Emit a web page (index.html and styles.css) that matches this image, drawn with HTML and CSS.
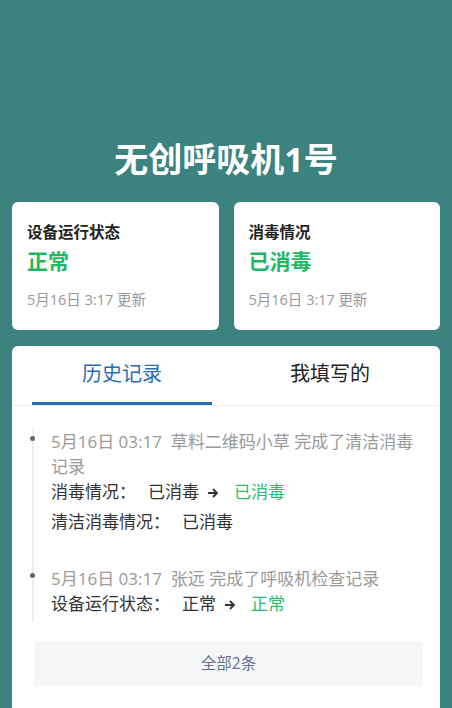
FILE: index.html
```html
<!DOCTYPE html>
<html lang="zh">
<head>
<meta charset="utf-8">
<link rel="stylesheet" href="styles.css">
</head>
<body>
<div class="page">
  <h1 class="title">无创呼吸机1号</h1>
  <div class="cards">
    <div class="card">
      <div class="card-label">设备运行状态</div>
      <div class="card-value">正常</div>
      <div class="card-time">5月16日 3:17 更新</div>
    </div>
    <div class="card">
      <div class="card-label">消毒情况</div>
      <div class="card-value">已消毒</div>
      <div class="card-time">5月16日 3:17 更新</div>
    </div>
  </div>
  <div class="panel">
    <div class="tabs">
      <div class="tab active">历史记录</div>
      <div class="tab second">我填写的</div>
    </div>
    <div class="timeline">
      <div class="entry">
        <div class="meta">5月16日 03:17&nbsp; 草料二维码小草 完成了清洁消毒记录</div>
        <div class="row">消毒情况：<span class="val">已消毒</span><svg class="arrow" viewBox="0 0 12 12" width="12" height="12"><path d="M1 6H10M6 2L10 6L6 10" fill="none" stroke="#333" stroke-width="1.8"/></svg><span class="new">已消毒</span></div>
        <div class="row">清洁消毒情况：<span class="val">已消毒</span></div>
      </div>
      <div class="entry">
        <div class="meta">5月16日 03:17&nbsp; 张远 完成了呼吸机检查记录</div>
        <div class="row">设备运行状态：<span class="val">正常</span><svg class="arrow" viewBox="0 0 12 12" width="12" height="12"><path d="M1 6H10M6 2L10 6L6 10" fill="none" stroke="#333" stroke-width="1.8"/></svg><span class="new">正常</span></div>
      </div>
    </div>
    <div class="more">全部2条</div>
  </div>
</div>
</body>
</html>
```
FILE: styles.css
```css
* { box-sizing: border-box; }
html, body { margin: 0; padding: 0; }
body {
  background: #3c837f;
  font-family: "Open Sans", "Noto Sans CJK SC", sans-serif;
  width: 452px;
  height: 708px;
  overflow: hidden;
}
.page { padding: 0 12px; }
.title {
  margin: 0;
  padding-top: 136px;
  height: 202px;
  text-align: center;
  color: #fff;
  font-size: 34px;
  font-weight: 700;
  line-height: 46px;
}
.cards {
  display: grid;
  grid-template-columns: 1fr 1fr;
  gap: 15px;
}
.card {
  background: #fff;
  border-radius: 6px;
  height: 128px;
  padding: 18px 15px 0;
}
.card-label {
  font-size: 15.5px;
  font-weight: 700;
  color: #222;
  line-height: 24px;
}
.card-value {
  font-size: 21px;
  font-weight: 700;
  color: #1fb861;
  line-height: 30px;
  margin-top: 2px;
}
.card-time {
  font-size: 14.5px;
  color: #999;
  line-height: 20px;
  margin-top: 14px;
}
.panel {
  margin-top: 16px;
  background: #fff;
  border-radius: 6px 6px 0 0;
  height: 400px;
  padding: 0 17px 0 20px;
}
.tabs {
  display: flex;
  margin: 0 -17px 0 -20px;
  padding: 0 20px;
  border-bottom: 1px solid #eeeeee;
}
.tab {
  flex: none;
  text-align: center;
  font-size: 20px;
  color: #222;
  line-height: 56px;
  height: 59px;
}
.tab.active {
  width: 180px;
  color: #2a6cb6;
  border-bottom: 3px solid #2a6cb6;
}
.tab.second {
  width: 180px;
  margin-left: 28px;
}
.timeline {
  margin-top: 23px;
  border-left: 2px solid #eeeeee;
  padding-left: 17px;
  padding-bottom: 6px;
}
.entry {
  position: relative;
  margin-bottom: 32px;
}
.entry:last-child { margin-bottom: 0; }
.entry::before {
  content: "";
  position: absolute;
  left: -21px;
  top: 7px;
  width: 5px;
  height: 5px;
  border-radius: 50%;
  background: #666;
}
.meta {
  font-size: 17px;
  color: #9a9a9a;
  line-height: 25px;
}
.row {
  font-size: 17px;
  color: #333;
  line-height: 25px;
}
.row + .row { margin-top: 5px; }
.val { margin-left: 12px; }
.arrow { margin: 0 15px 0 8px; vertical-align: -1px; }
.new { color: #2cbc6e; }
.more {
  margin-top: 19px;
  margin-left: 2px;
  background: #f5f6f7;
  border-radius: 4px;
  height: 45px;
  line-height: 45px;
  text-align: center;
  color: #66718f;
  font-size: 15.5px;
}
```
